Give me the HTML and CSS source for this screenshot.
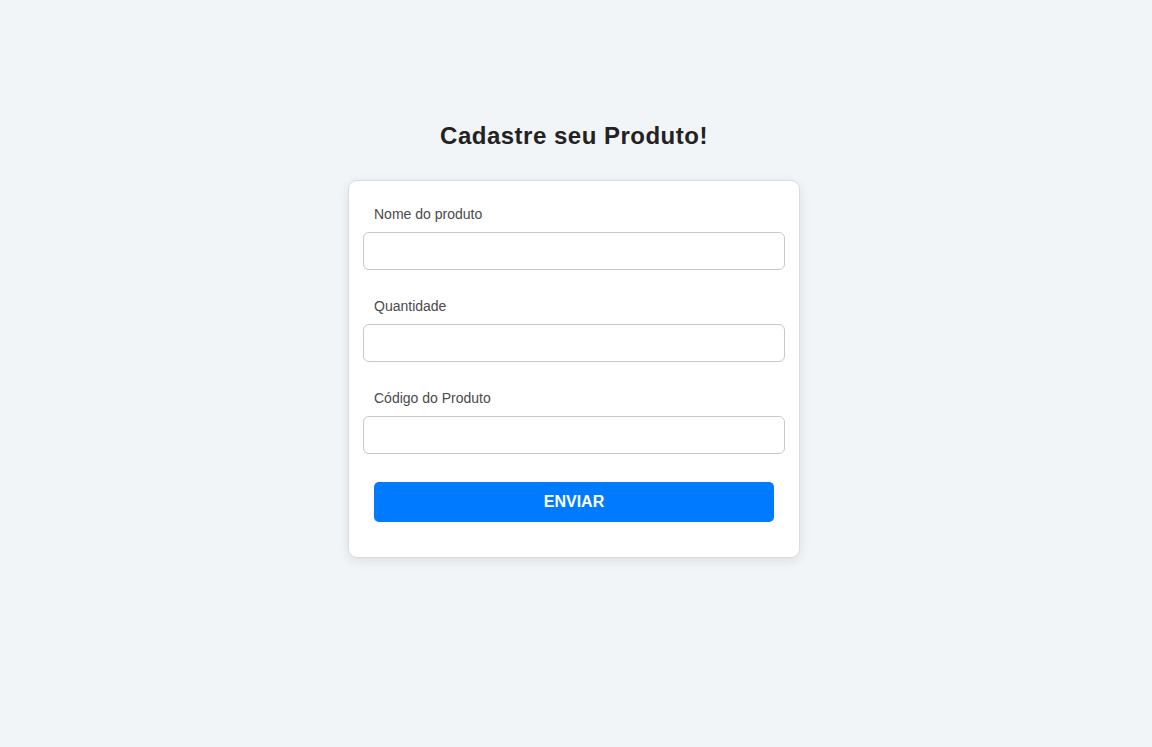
FILE: index.html
```html
<!DOCTYPE html>
<html lang="pt-BR">
<head>
<meta charset="utf-8">
<title>Cadastre seu Produto!</title>
<link rel="stylesheet" href="styles.css">
</head>
<body>
<main class="page">
  <h1 class="title">Cadastre seu Produto!</h1>
  <form class="card">
    <div class="field">
      <label class="label" for="nome">Nome do produto</label>
      <input class="input" id="nome" type="text">
    </div>
    <div class="field">
      <label class="label" for="qtd">Quantidade</label>
      <input class="input" id="qtd" type="text">
    </div>
    <div class="field">
      <label class="label" for="cod">Código do Produto</label>
      <input class="input" id="cod" type="text">
    </div>
    <button class="button" type="button">ENVIAR</button>
  </form>
</main>
</body>
</html>
```
FILE: styles.css
```css
* { box-sizing: border-box; }
html, body {
  margin: 0;
  height: 100%;
  background: #f2f5f8;
  font-family: "Liberation Sans", Arial, sans-serif;
}
.page {
  display: flex;
  flex-direction: column;
  align-items: center;
  padding-top: 122px;
  padding-right: 4px;
}
.title {
  margin: 0 0 30px;
  font-size: 24px;
  line-height: 28px;
  font-weight: bold;
  letter-spacing: 0.5px;
  color: #222;
}
.card {
  width: 452px;
  background: #fff;
  border: 1px solid #dcdcdc;
  border-radius: 9px;
  box-shadow: 0 3px 12px rgba(0, 0, 0, 0.09);
  padding: 23px 14px 35px;
  display: flex;
  flex-direction: column;
}
.field {
  display: flex;
  flex-direction: column;
  margin-bottom: 26px;
}
.field:nth-of-type(3) { margin-bottom: 28px; }
.label {
  padding-left: 11px;
  font-size: 14px;
  line-height: 20px;
  color: #4a4a4a;
  margin-bottom: 8px;
}
.input {
  height: 38px;
  width: 100%;
  border: 1px solid #c8c8c8;
  border-radius: 6px;
  background: #fff;
  font-family: inherit;
  font-size: 14px;
  padding: 0 10px;
}
.button {
  align-self: center;
  width: 400px;
  height: 40px;
  border: 0;
  border-radius: 5px;
  background: #007bff;
  color: #fff;
  font-family: inherit;
  font-size: 16px;
  font-weight: bold;
}
```
